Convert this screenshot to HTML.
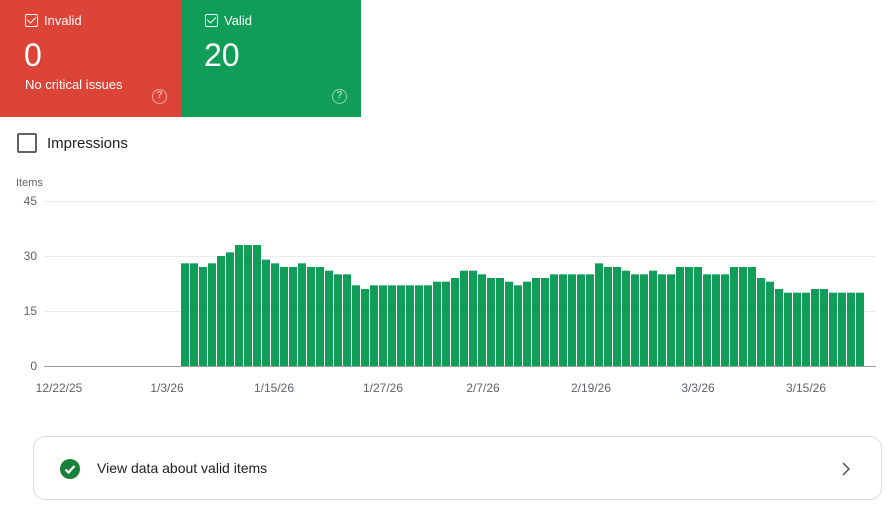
<!DOCTYPE html>
<html><head><meta charset="utf-8"><style>
*{margin:0;padding:0;box-sizing:border-box}
body{width:894px;height:524px;background:#fff;font-family:"Liberation Sans",Arial,sans-serif;position:relative;overflow:hidden}
.card{position:absolute;top:0;height:117px;color:#fff}
.lbl{position:absolute;left:25px;top:13px;font-size:13px;display:flex;align-items:center}
.cb{width:13px;height:13px;border:1.5px solid #fff;border-radius:2px;margin-right:6px;position:relative}
.cb:after{content:"";position:absolute;left:3px;top:0px;width:4px;height:7px;border:solid #fff;border-width:0 1.5px 1.5px 0;transform:rotate(45deg)}
.num{position:absolute;left:24px;top:37px;font-size:32px}
.sub{position:absolute;left:25px;top:77px;font-size:13px}
.q{position:absolute;width:15px;height:15px;border:1.5px solid rgba(255,255,255,.55);border-radius:50%;font-size:10px;line-height:12px;text-align:center;color:rgba(255,255,255,.6);font-weight:bold}
.ax{position:absolute;font-size:12px;color:#5f6368}
</style></head><body>
<div class="card" style="left:0;width:181px;background:#db4437">
 <div class="lbl"><div class="cb"></div>Invalid</div>
 <div class="num">0</div>
 <div class="sub">No critical issues</div>
 <div class="q" style="left:152px;top:89px">?</div>
</div>
<div class="card" style="left:181px;width:180px;background:#0f9d58">
 <div class="lbl" style="left:24px"><div class="cb"></div>Valid</div>
 <div class="num" style="left:23px">20</div>
 <div class="q" style="left:151px;top:89px">?</div>
</div>
<div style="position:absolute;left:17px;top:133px;width:20px;height:20px;border:2px solid #5f6368;border-radius:2px"></div>
<div style="position:absolute;left:47px;top:135px;font-size:15px;color:#202124">Impressions</div>
<div class="ax" style="left:16px;top:177px;font-size:11px">Items</div>
<svg id="ch" style="position:absolute;left:0;top:0" width="894" height="420"></svg>
<div style="position:absolute;left:33px;top:436px;width:849px;height:64px;border:1px solid #dadce0;border-radius:12px">
 <div style="position:absolute;left:26px;top:22px;width:20px;height:20px;border-radius:50%;background:#188038"></div>
 <svg style="position:absolute;left:26px;top:22px" width="20" height="20"><path d="M5.5 10.5l3 3 6-6.5" stroke="#fff" stroke-width="2.2" fill="none"/></svg>
 <div style="position:absolute;left:63px;top:23px;font-size:14px;color:#202124">View data about valid items</div>
 <svg style="position:absolute;left:806px;top:24px" width="12" height="16"><path d="M3 2l6 6-6 6" stroke="#5f6368" stroke-width="1.6" fill="none"/></svg>
</div>
<script>
var v=[28,28,27,28,30,31,33,33,33,29,28,27,27,28,27,27,26,25,25,22,21,22,22,22,22,22,22,22,23,23,24,26,26,25,24,24,23,22,23,24,24,25,25,25,25,25,28,27,27,26,25,25,26,25,25,27,27,27,25,25,25,27,27,27,24,23,21,20,20,20,21,21,20,20,20,20];
var s='';
[[45,201],[30,256],[15,311],[0,366]].forEach(function(a){
 s+='<line x1="44" x2="876" y1="'+(a[1]+.5)+'" y2="'+(a[1]+.5)+'" stroke="'+(a[0]?'#ebebeb':'#9e9e9e')+'"/>';
 s+='<text x="37" y="'+(a[1]+4)+'" text-anchor="end" font-size="12" fill="#5f6368" font-family="Liberation Sans,sans-serif">'+a[0]+'</text>';
});
v.forEach(function(x,i){var h=x*165/45;s+='<rect x="'+(181+i*9)+'" y="'+(366-h)+'" width="8" height="'+h+'" fill="#0f9d58"/>';});
[['12/22/25',59],['1/3/26',167],['1/15/26',274],['1/27/26',383],['2/7/26',483],['2/19/26',591],['3/3/26',698],['3/15/26',806]].forEach(function(a){
 s+='<text x="'+a[1]+'" y="392" text-anchor="middle" font-size="12" fill="#5f6368" font-family="Liberation Sans,sans-serif">'+a[0]+'</text>';});
document.getElementById('ch').innerHTML=s;
</script>
</body></html>
